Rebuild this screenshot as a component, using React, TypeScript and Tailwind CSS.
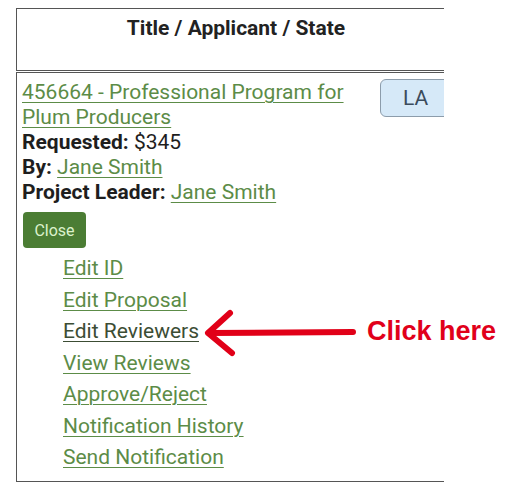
import React from "react";

const linkCls = "text-[#5c8c47] underline decoration-1 underline-offset-[3px]";

export default function App() {
  const actions = [
    "Edit ID",
    "Edit Proposal",
    "Edit Reviewers",
    "View Reviews",
    "Approve/Reject",
    "Notification History",
    "Send Notification",
  ];
  return (
    <div
      className="relative w-[524px] h-[501px] bg-white overflow-hidden"
      style={{ fontFamily: "Roboto, 'Noto Sans', sans-serif" }}
    >
      <div className="ml-[16px] pt-[8px] w-[428px] overflow-hidden">
        <div className="w-[440px]">
          <div className="h-[63px] border border-[#555] text-center pt-[7px] text-[21px] leading-[25px] font-bold text-[#222]">
            Title / Applicant / State
          </div>
          <div className="mt-[1px] h-[410px] border border-[#555] pt-[7px] pl-[5px] pr-[4px] text-[21px] leading-[25px] text-[#1e1e1e]">
            <div className="flex justify-between">
              <div className="w-[352px]">
                <a href="#" className={linkCls}>
                  456664 - Professional Program for Plum Producers
                </a>
                <div>
                  <span className="font-bold">Requested:</span> $345
                </div>
                <div>
                  <span className="font-bold">By:</span>{" "}
                  <a href="#" className={linkCls}>Jane Smith</a>
                </div>
                <div>
                  <span className="font-bold">Project Leader:</span>{" "}
                  <a href="#" className={linkCls}>Jane Smith</a>
                </div>
              </div>
              <div className="-mt-px h-[38px] w-[71px] shrink-0 rounded-[6px] border border-[#8c9cab] bg-[#d6e9f8] flex items-center justify-center text-[21px] text-[#3b4b5c]">
                LA
              </div>
            </div>
            <button className="mt-[7px] ml-px h-[36px] w-[63px] rounded-[4px] bg-[#4b7d34] text-[#dcf2cc] text-[16px] flex items-center justify-center">
              Close
            </button>
            <div className="mt-[5px] pl-[41px] flex flex-col items-start leading-[31.5px]">
              {actions.map((a) => (
                <a
                  key={a}
                  href="#"
                  className={
                    a === "Edit Reviewers"
                      ? "text-[#3c4d34] underline decoration-1 underline-offset-[3px]"
                      : linkCls
                  }
                >
                  {a}
                </a>
              ))}
            </div>
          </div>
        </div>
      </div>

      <svg
        className="absolute left-0 top-0 pointer-events-none"
        width="524"
        height="501"
        viewBox="0 0 524 501"
      >
        <g stroke="#e10018" strokeWidth="6" strokeLinecap="round" strokeLinejoin="round" fill="none">
          <line x1="209" y1="333" x2="353" y2="332" />
          <polyline points="230,313 208,333 232,353" />
        </g>
      </svg>
      <div
        className="absolute left-[367px] top-[318px] text-[27px] leading-[27px] font-bold text-[#e1001a] whitespace-nowrap"
        style={{ fontFamily: "'Liberation Sans', Arial, sans-serif" }}
      >
        Click here
      </div>
    </div>
  );
}
